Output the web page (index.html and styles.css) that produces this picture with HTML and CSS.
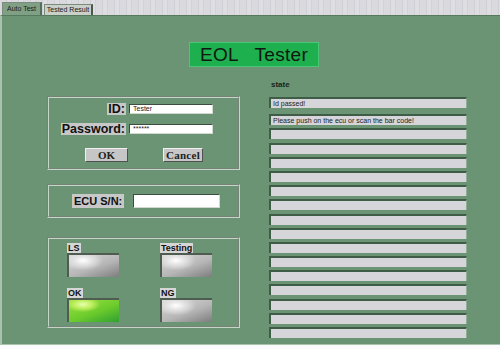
FILE: index.html
```html
<!DOCTYPE html>
<html lang="en">
<head>
  <meta charset="UTF-8">
  <title>EOL Tester</title>
  <link rel="stylesheet" href="styles.css">
</head>
<body>
  <div class="tabs">
    <div class="tab active">Auto Test</div>
    <div class="tab">Tested Result</div>
  </div>

  <div class="panel">
    <div class="title">EOL   Tester</div>

    <div class="columns">
      <div class="left">
        <!-- login -->
        <div class="group login">
          <div class="form">
            <span class="label">ID:</span>
            <div class="input">Tester</div>
            <span class="label">Password:</span>
            <div class="input">******</div>
          </div>
          <div class="buttons">
            <button class="btn ok">OK</button>
            <button class="btn cancel">Cancel</button>
          </div>
        </div>

        <!-- ecu serial -->
        <div class="group ecu">
          <span class="label">ECU S/N:</span>
          <div class="input wide"></div>
        </div>

        <!-- indicators -->
        <div class="group lamps">
          <div class="lamp">
            <span class="lamp-label">LS</span>
            <div class="led"></div>
          </div>
          <div class="lamp">
            <span class="lamp-label">Testing</span>
            <div class="led"></div>
          </div>
          <div class="lamp">
            <span class="lamp-label">OK</span>
            <div class="led on"></div>
          </div>
          <div class="lamp">
            <span class="lamp-label">NG</span>
            <div class="led"></div>
          </div>
        </div>
      </div>

      <div class="right">
        <div class="state-title">state</div>
        <div class="rows">
          <div class="row first">Id passed!</div>
          <div class="row">Please push on the ecu or scan the bar code!</div>
          <div class="row"></div>
          <div class="row"></div>
          <div class="row"></div>
          <div class="row"></div>
          <div class="row"></div>
          <div class="row"></div>
          <div class="row"></div>
          <div class="row"></div>
          <div class="row"></div>
          <div class="row"></div>
          <div class="row"></div>
          <div class="row"></div>
          <div class="row"></div>
          <div class="row"></div>
          <div class="row"></div>
        </div>
      </div>
    </div>
  </div>
</body>
</html>
```

FILE: styles.css
```css
/* reset */
* {
  margin: 0;
  padding: 0;
  box-sizing: border-box;
}

body {
  width: 500px;
  height: 349px;
  background: #fbfbfb;
  font-family: "Liberation Sans", Arial, sans-serif;
  overflow: hidden;
}

/* tab strip */
.tabs {
  height: 15px;
  display: flex;
  align-items: flex-end;
  padding-left: 2px;
  gap: 2px;
  background: repeating-linear-gradient(90deg, #d9d9de 0 6px, #cfcfd6 6px 7px, #dedee2 7px 11px, #d2d2d8 11px 12px);
}

.tab {
  font-size: 7px;
  line-height: 10px;
  height: 11px;
  color: #202020;
  background: #c9cfc9;
  border: 1px solid #7c8c7c;
  border-bottom: none;
  border-right: 2px solid #4a584a;
  width: 49px;
  text-align: center;
  white-space: nowrap;
}

.tab.active {
  height: 13px;
  line-height: 12px;
  width: 40px;
  background: #7fa085;
  border-right-color: #55705a;
}

/* main green panel */
.panel {
  height: 330px;
  background: #6b9474;
  border-left: 2px solid #a9c2ad;
  border-top: 1px solid #55795d;
  border-bottom: 1px solid #a9c2ad;
}

.title {
  margin: 26px 0 0 187px;
  width: 130px;
  height: 25px;
  background: #1eaf4e;
  border: 1px solid #4cc576;
  font-size: 19px;
  line-height: 23px;
  letter-spacing: 0.3px;
  color: #101810;
  white-space: pre;
  text-align: center;
}

.columns {
  display: flex;
  margin-top: 11px;
}

.left {
  width: 193px;
  margin-left: 45px;
  padding-top: 18px;
}

.right {
  width: 198px;
  margin-left: 29px;
}

/* group boxes */
.group {
  border: 2px groove #c4d6c6;
}

.label {
  background: #c8c8c8;
  font-weight: bold;
  color: #111;
  white-space: nowrap;
}

.input {
  background: #fff;
  border: 1px solid #3c4c3e;
  border-right-color: #d0d8d0;
  border-bottom-color: #d0d8d0;
  font-size: 7px;
  line-height: 8px;
  padding-left: 3px;
  color: #222;
}

.login {
  height: 74px;
  padding-top: 5px;
}

.form {
  display: grid;
  grid-template-columns: 77px 84px;
  column-gap: 3px;
  row-gap: 8px;
  align-items: center;
}

.form .label {
  justify-self: end;
  font-size: 12.5px;
  line-height: 12px;
  padding: 0 1px;
}

.form .label:nth-of-type(3) {
  line-height: 14px;
}

.form .input {
  height: 10px;
}

.buttons {
  display: flex;
  margin-top: 13px;
  padding-left: 36px;
  gap: 35px;
}

.btn {
  height: 14px;
  background: #c6c6c6;
  border: 1px solid;
  border-color: #f0f0f0 #505050 #505050 #f0f0f0;
  font-family: "Liberation Serif", serif;
  font-weight: bold;
  font-size: 11px;
  line-height: 12px;
  color: #222;
}

.ok {
  width: 43px;
}

.cancel {
  width: 40px;
  letter-spacing: 0.3px;
}

.ecu {
  margin-top: 14px;
  height: 34px;
  display: flex;
  align-items: center;
  padding-left: 23px;
}

.ecu .label {
  font-size: 11px;
  line-height: 14px;
  padding: 0 2px;
}

.input.wide {
  margin-left: 9px;
  width: 87px;
  height: 14px;
}

/* indicator lamps */
.lamps {
  margin-top: 19px;
  height: 91px;
  display: grid;
  grid-template-columns: 93px 60px;
  row-gap: 7px;
  padding: 4px 0 0 18px;
}

.lamp {
  display: flex;
  flex-direction: column;
  align-items: flex-start;
}

.lamp-label {
  background: #d6d6d6;
  font-size: 9px;
  line-height: 10px;
  font-weight: bold;
  color: #111;
  padding: 0 1px;
}

.led {
  width: 52px;
  height: 24px;
  border-top: 2px solid #4f5d51;
  border-left: 2px solid #4f5d51;
  background: radial-gradient(ellipse 40% 45% at 28% 25%, #ffffff 0%, #e2e2e2 45%, transparent 100%),
              linear-gradient(160deg, #d8d8d8 0%, #b6b6b6 55%, #7d7d7d 100%);
}

.led.on {
  background: radial-gradient(ellipse 35% 35% at 28% 20%, #e8ffb0 0%, #bff060 50%, transparent 100%),
              linear-gradient(160deg, #9ce040 0%, #6ccb2c 55%, #2fa030 100%);
}

/* state list */
.state-title {
  font-size: 8px;
  font-weight: bold;
  color: #16261a;
  line-height: 10px;
  padding-left: 2px;
  margin-top: 2px;
}

.rows {
  margin-top: 7px;
  display: flex;
  flex-direction: column;
  gap: 3.2px;
}

.row {
  height: 11px;
  background: #d6d5d9;
  border-top: 2px solid #3f5c46;
  border-left: 2px solid #3f5c46;
  border-right: 1px solid #8fae95;
  font-size: 7px;
  line-height: 9px;
  padding-left: 2px;
  color: #222;
}

.row.first {
  margin-bottom: 3px;
}
```
